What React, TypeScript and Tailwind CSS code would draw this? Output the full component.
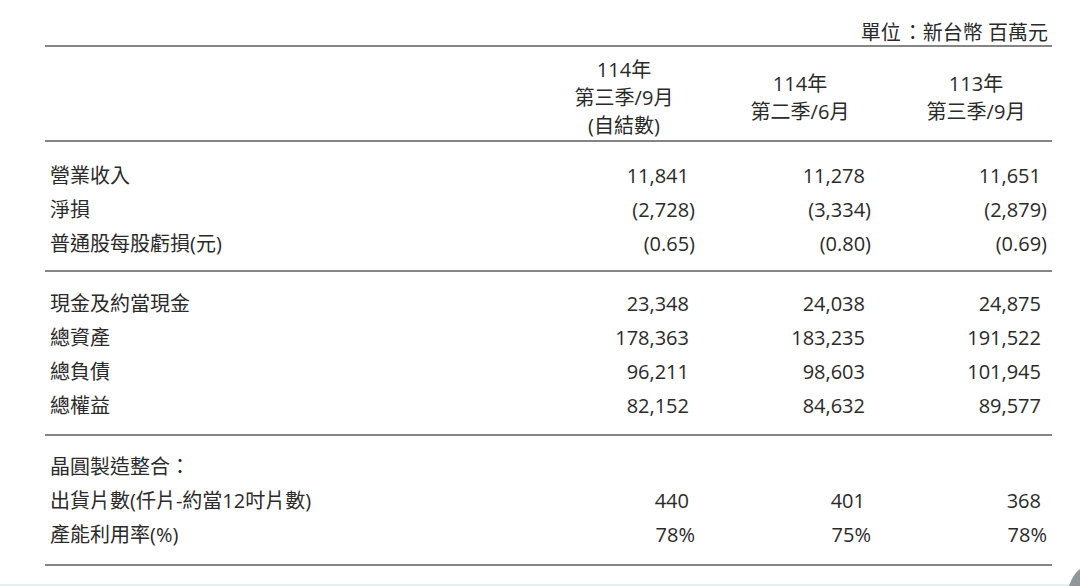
import React from "react";

type Row = { label: string; values: string[] };

const sections: Row[][] = [
  [
    { label: "營業收入", values: ["11,841", "11,278", "11,651"] },
    { label: "淨損", values: ["(2,728)", "(3,334)", "(2,879)"] },
    { label: "普通股每股虧損(元)", values: ["(0.65)", "(0.80)", "(0.69)"] },
  ],
  [
    { label: "現金及約當現金", values: ["23,348", "24,038", "24,875"] },
    { label: "總資產", values: ["178,363", "183,235", "191,522"] },
    { label: "總負債", values: ["96,211", "98,603", "101,945"] },
    { label: "總權益", values: ["82,152", "84,632", "89,577"] },
  ],
  [
    { label: "晶圓製造整合：", values: ["", "", ""] },
    { label: "出貨片數(仟片-約當12吋片數)", values: ["440", "401", "368"] },
    { label: "產能利用率(%)", values: ["78%", "75%", "78%"] },
  ],
];

// spacing above/below each block of rows
const blockPad = ["pt-[17px] pb-[9px]", "pt-[15px] pb-[11px]", "pt-[14px] pb-[12px]"];

const headers = [
  ["114年", "第三季/9月", "(自結數)"],
  ["114年", "第二季/6月"],
  ["113年", "第三季/9月"],
];

function Rule() {
  return <div className="h-[2px] w-[1007px] bg-[#858585]" />;
}

function Value({ v }: { v: string }) {
  // parens and % hang out to the right, like an accounting column
  const hang = v.endsWith(")") || v.endsWith("%");
  return (
    <div className={hang ? "text-right pr-[17px]" : "text-right pr-[23px]"}>
      {v}
    </div>
  );
}

export default function App() {
  return (
    <div
      className="relative w-[1080px] h-[586px] bg-white overflow-hidden text-[20px] text-[#2a2a2a]"
      style={{ fontFamily: '"Open Sans", "Noto Sans CJK TC", sans-serif' }}
    >
      <div className="pl-[45px]">
        {/* unit */}
        <div className="w-[1003px] h-[45px] pt-[21px] leading-[24px] text-right">
          單位<span className="inline-block pl-[2px]">：</span>新台幣 百萬元
        </div>
        <Rule />

        {/* column headers */}
        <div className="grid grid-cols-[491px_176px_176px_176px] w-[1019px] pt-[9px] items-center">
          <div />
          {headers.map((h, i) => (
            <div key={i} className="text-center leading-[28px]">
              {h.map((line) => (
                <div key={line}>{line}</div>
              ))}
            </div>
          ))}
        </div>
        <Rule />

        {sections.map((rows, si) => (
          <div key={si}>
            <div className={blockPad[si]}>
              {rows.map((r) => (
                <div
                  key={r.label}
                  className="grid grid-cols-[491px_176px_176px_176px] w-[1019px] leading-[34px]"
                >
                  <div className="pl-[5px]">{r.label}</div>
                  {r.values.map((v, i) => (
                    <Value key={i} v={v} />
                  ))}
                </div>
              ))}
            </div>
            <Rule />
          </div>
        ))}
      </div>

      {/* bottom edge of the page */}
      <div className="absolute left-0 bottom-0 w-full h-[2px] bg-[#e6f0f4]" />
      <svg className="absolute right-0 bottom-0" width="12" height="20" viewBox="0 0 12 20">
        <path d="M1 20 Q5 8 12 3 L12 20 Z" fill="#8f979a" />
      </svg>
    </div>
  );
}
